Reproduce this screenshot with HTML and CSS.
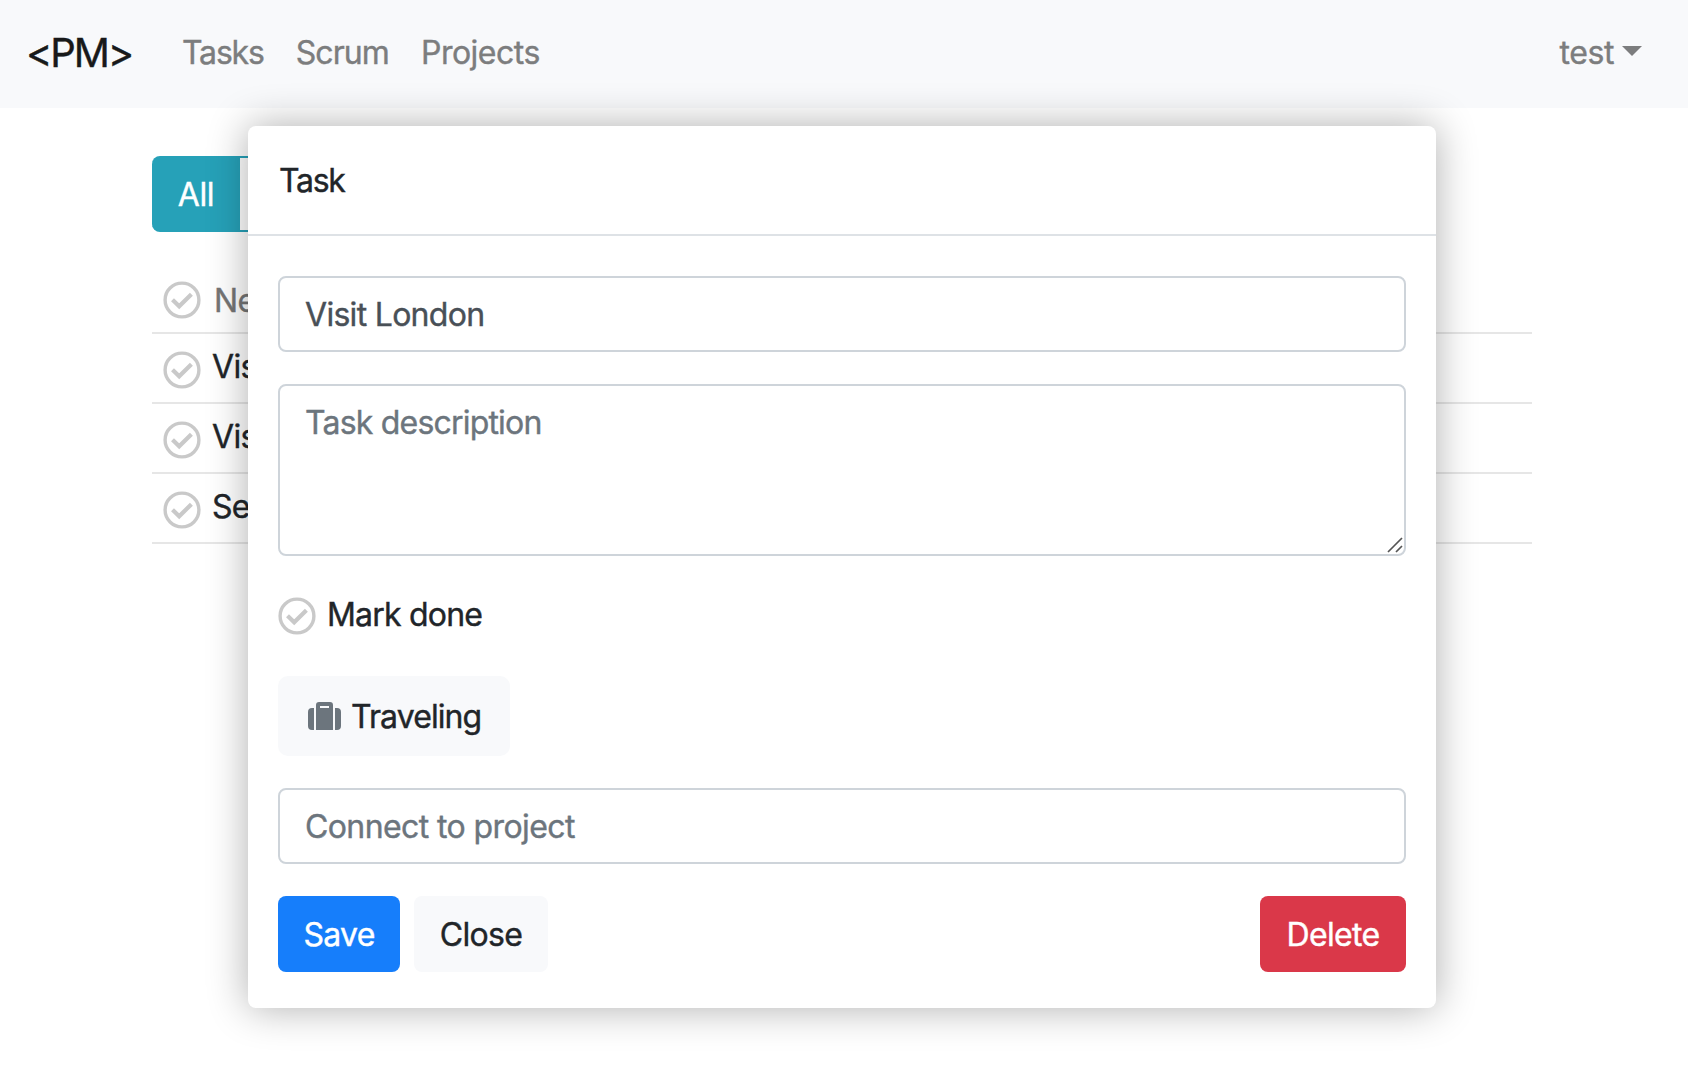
FILE: index.html
```html
<!DOCTYPE html>
<html lang="en">
<head>
<meta charset="utf-8">
<title>PM - Tasks</title>
<link rel="stylesheet" href="styles.css">
</head>
<body>
<svg class="defs" width="0" height="0">
  <symbol id="check" viewBox="0 0 38 38">
    <circle cx="19" cy="19" r="16.9" fill="none" stroke="currentColor" stroke-width="3.4"/>
    <path d="M9.5 18.8 L16.2 25.3 L28.4 13.2" fill="none" stroke="currentColor" stroke-width="4.2"/>
  </symbol>
</svg>
<nav class="navbar">
  <a class="brand">&lt;PM&gt;</a>
  <div class="links"><a class="tasks">Tasks</a><a class="scrum">Scrum</a><a class="projects">Projects</a></div>
  <a class="user"><span>test</span><i class="caret"></i></a>
</nav>
<main class="container">
  <div class="filters"><button class="filter active">All</button><button class="filter"></button></div>
  <ul class="tasks-list">
    <li class="row new"><svg class="check"><use href="#check"/></svg><span>New</span></li>
    <li class="row"><svg class="check"><use href="#check"/></svg><span>Visit</span></li>
    <li class="row"><svg class="check"><use href="#check"/></svg><span>Visit</span></li>
    <li class="row"><svg class="check"><use href="#check"/></svg><span>See</span></li>
  </ul>
</main>
<section class="modal">
  <header class="modal-header"><span class="title">Task</span></header>
  <div class="modal-body">
    <input class="field name" value="Visit London">
    <div class="area">
      <textarea class="field description" placeholder="Task description"></textarea>
      <svg class="grip" width="16" height="16" viewBox="0 0 16 16"><path d="M1 15 L15 1 M9 15 L15 9" stroke="#555" stroke-width="1.7" fill="none"/></svg>
    </div>
    <div class="done"><svg class="check"><use href="#check"/></svg><span>Mark done</span></div>
    <div class="project">
      <svg class="suitcase" width="33" height="28" viewBox="0 0 33 28" fill="currentColor"><path d="M4 6H6V28H4Q0 28 0 24V10Q0 6 4 6ZM27 6H29Q33 6 33 10V24Q33 28 29 28H27Z"/><path fill-rule="evenodd" d="M11 0H22Q25 0 25 3V28H8V3Q8 0 11 0ZM12 4V6H21V4Z"/></svg>
      <span>Traveling</span>
    </div>
    <input class="field connect" placeholder="Connect to project">
    <div class="actions"><button class="btn save">Save</button><button class="btn close">Close</button><button class="btn delete">Delete</button></div>
  </div>
</section>
</body>
</html>
```
FILE: styles.css
```css
* { box-sizing: border-box; }
body { margin: 0; width: 1688px; height: 1068px; overflow: hidden; background: #fff; color: #212529; font: 400 32px/48px Inter, "Liberation Sans", sans-serif; letter-spacing: -0.7px; -webkit-text-stroke: 0.4px currentColor; }
button, input, textarea { font: inherit; letter-spacing: inherit; margin: 0; }
.defs { position: absolute; }
.navbar { height: 108px; padding: 0 46px 2px 26px; background: #f8f9fb; display: flex; align-items: center; color: #7c7d7e; }
.brand { width: 156px; font-size: 40px; line-height: 60px; letter-spacing: -2.1px; color: #18191a; }
.links { display: flex; gap: 32px; }
.tasks { letter-spacing: -1.2px; }
.scrum { letter-spacing: -0.9px; }
.projects { letter-spacing: -0.5px; }
.user { margin-left: auto; display: flex; align-items: center; gap: 8px; letter-spacing: -0.4px; }
.caret { border: 10px solid transparent; border-top-color: #7c7d7e; border-bottom: 0; margin-top: -4px; }
.container { width: 1380px; margin: 48px 0 0 152px; }
.filters { display: flex; height: 76px; }
.filter { border: 2px solid #26a1b8; border-left-width: 0; border-radius: 0 8px 8px 0; background: #fff; color: #26a1b8; width: 120px; padding: 0 24px; }
.filter.active { width: 88px; border-radius: 8px 0 0 8px; background: #26a1b8; color: #fff; padding: 2px 0 0 2px; letter-spacing: -0.4px; }
.tasks-list { list-style: none; margin: 32px 0 0; padding: 0; }
.row { height: 70px; border-bottom: 2px solid #e6e6e6; padding: 7px 0 0 11px; display: flex; align-items: flex-start; gap: 11px; }
.row span { margin-top: 2px; }
.row .check { margin-top: 9.5px; }
.row.new { color: #757575; gap: 13px; }
.row.new span { margin-top: 6px; }
.check { width: 38px; height: 38px; color: #c9c9c9; flex: none; }
.modal { position: absolute; left: 248px; top: 126px; width: 1188px; height: 882px; border-radius: 8px; background: #fff; box-shadow: 0 0 40px rgba(0,0,0,.32); }
.modal-header { height: 110px; border-bottom: 2px solid #dee2e6; padding: 31px 31px; }
.title { letter-spacing: -1.3px; }
.modal-body { padding: 40px 30px 36px; display: flex; flex-direction: column; }
.field { display: block; width: 100%; height: 76px; border: 2px solid #ced4da; border-radius: 8px; padding: 12px 24px 12px 25px; background: #fff; color: #495057; outline: 0; }
.field::placeholder { color: #6c757d; opacity: 1; }
.area { position: relative; margin: 32px 0 40px; }
.description { height: 172px; resize: none; padding-top: 13px; letter-spacing: -0.8px; }
.grip { position: absolute; right: 3px; bottom: 3px; }
.connect { letter-spacing: -0.6px; }
.done { height: 40px; display: flex; align-items: center; gap: 11px; letter-spacing: -0.8px; }
.done span { margin-top: -2px; }
.project { align-self: flex-start; width: 232px; height: 80px; margin: 40px 0 32px; padding: 0 30px; border-radius: 10px; background: #f8f9fb; display: flex; align-items: center; gap: 10px; }
.project span { margin-top: 2px; letter-spacing: -0.9px; }
.suitcase { color: #6c757d; flex: none; }
.actions { display: flex; margin-top: 32px; }
.btn { height: 76px; border: 0; border-radius: 8px; padding: 2px 0 0; color: #fff; }
.save { width: 122px; background: #167efb; }
.close { width: 134px; margin-left: 14px; background: #f8f9fb; color: #212529; }
.delete { width: 146px; margin-left: auto; background: #da3849; }
```
